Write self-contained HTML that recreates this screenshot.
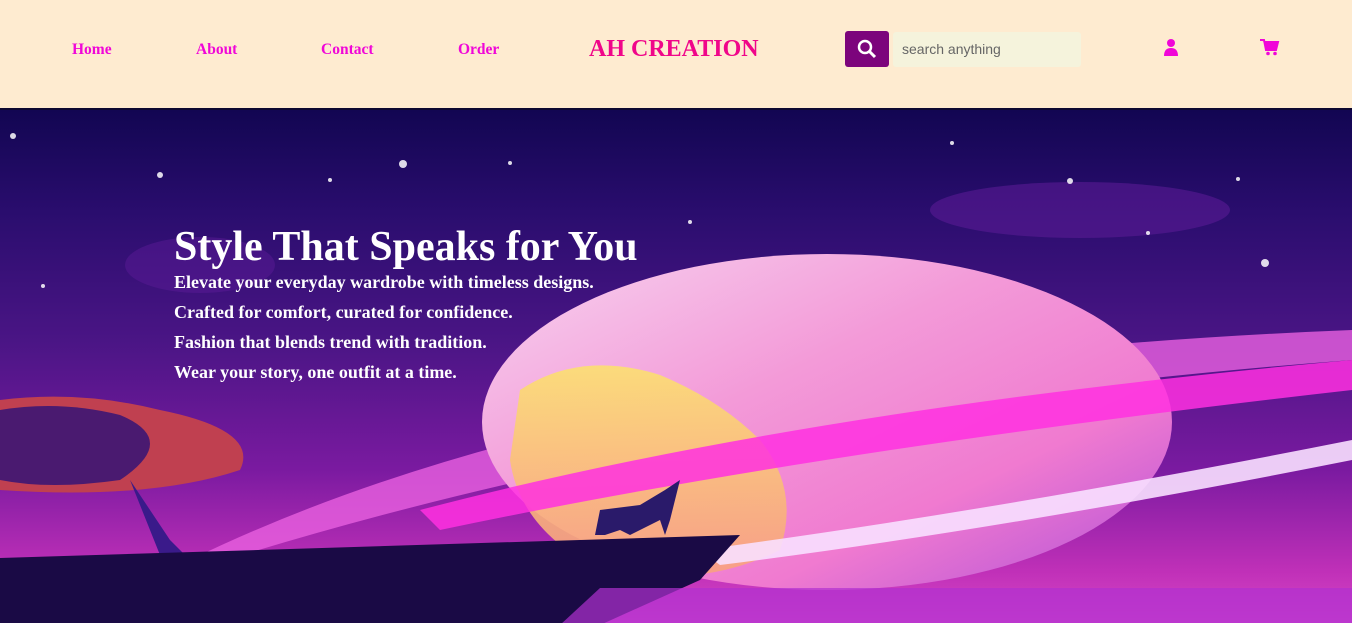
<!DOCTYPE html>
<html><head><meta charset="utf-8"><style>
*{margin:0;padding:0;box-sizing:border-box}
body{width:1352px;height:623px;overflow:hidden;font-family:"Liberation Serif",serif;background:#feebd0}
.hdr{position:absolute;left:0;top:0;width:1352px;height:108px;background:#feebd0}
.nav{position:absolute;top:41px;font-weight:bold;font-size:15.5px;color:#f006d8}
.logo{position:absolute;left:589px;top:36px;font-size:24px;font-weight:bold;color:#f0068a}
.sbtn{position:absolute;left:845px;top:31px;width:44px;height:36px;background:#7c047c;border-radius:3px}
.sin{position:absolute;left:893px;top:32px;width:188px;height:35px;background:#f5f3dc;border-radius:3px;font-family:"Liberation Sans",sans-serif;font-size:14px;color:#666;padding:9px 0 0 9px}
.hero{position:absolute;left:0;top:108px;width:1352px;height:515px;overflow:hidden;border-top:2px solid #0d0830;
background:linear-gradient(180deg,#120652 0%,#2a0d6e 20%,#4a1585 45%,#7a1aa0 70%,#c030b8 90%,#d848c8 100%)}
.t{position:absolute;color:#fff;font-weight:bold}
</style></head><body>
<div class="hdr">
<div class="nav" style="left:72px">Home</div>
<div class="nav" style="left:196px">About</div>
<div class="nav" style="left:321px">Contact</div>
<div class="nav" style="left:458px">Order</div>
<div class="logo">AH CREATION</div>
<div class="sbtn"><svg width="44" height="36"><circle cx="20" cy="16" r="6" stroke="#fff" stroke-width="2.5" fill="none"/><line x1="24.5" y1="20.5" x2="30" y2="26" stroke="#fff" stroke-width="3"/></svg></div>
<div class="sin">search anything</div>
<svg style="position:absolute;left:1162px;top:38px" width="18" height="18"><circle cx="9" cy="5" r="4" fill="#f006d8"/><path d="M2 18 Q2 10 9 10 Q16 10 16 18Z" fill="#f006d8"/></svg>
<svg style="position:absolute;left:1260px;top:38px" width="20" height="18"><path d="M0 2 H4 L6 12 H16 L18 4 H5" fill="#f006d8" stroke="#f006d8" stroke-width="2"/><circle cx="8" cy="15.5" r="1.8" fill="#f006d8"/><circle cx="15" cy="15.5" r="1.8" fill="#f006d8"/></svg>
</div>
<div class="hero">
<svg width="1352" height="515" style="position:absolute;left:0;top:0">
<defs><linearGradient id="p" x1="0" y1="0" x2="1" y2="1"><stop offset="0" stop-color="#f7d4f0"/><stop offset=".4" stop-color="#f39ad8"/><stop offset=".7" stop-color="#f07ad0"/><stop offset="1" stop-color="#b050d8"/></linearGradient>
<linearGradient id="y" x1="0" y1="0" x2="0" y2="1"><stop offset="0" stop-color="#fce070"/><stop offset="1" stop-color="#f8a080"/></linearGradient></defs>
<ellipse cx="1080" cy="100" rx="150" ry="28" fill="#5a1a95" opacity=".6"/>
<ellipse cx="200" cy="155" rx="75" ry="28" fill="#5a1a95" opacity=".5"/>
<path d="M190 450 Q600 250 1352 220 L1352 250 Q700 300 210 455Z" fill="#e860e0" opacity=".8"/>
<ellipse cx="827" cy="312" rx="345" ry="168" fill="url(#p)"/>
<path d="M520 280 Q580 240 660 265 Q720 290 760 330 Q800 380 780 440 Q700 480 600 460 Q520 420 510 350Z" fill="url(#y)" opacity=".9"/>
<path d="M420 400 Q800 300 1352 250 L1352 280 Q820 340 440 420Z" fill="#ff30e0" opacity=".85"/>
<path d="M700 440 Q1000 400 1352 330 L1352 350 Q1000 420 720 455Z" fill="#f8e0ff" opacity=".9"/>
<path d="M0 290 Q80 280 160 300 Q260 320 240 360 Q150 390 0 380Z" fill="#c04050"/>
<path d="M0 300 Q60 290 120 305 Q180 330 120 370 Q50 380 0 370Z" fill="#4a1a70"/>
<path d="M130 370 L170 430 L185 445 L160 445 Z" fill="#3a1a8a"/>
<path d="M0 448 L740 425 L700 470 L600 515 L0 515Z" fill="#1a0a45"/>
<path d="M600 478 L1352 478 L1352 515 L560 515Z" fill="#b030d0" opacity=".7"/>
<path d="M595 425 L600 400 L640 395 L665 380 L680 370 L670 410 L665 425 L660 410 L640 420 L630 425 L620 420 L605 425Z" fill="#2a1a6a"/>
<g fill="#fff" opacity=".85"><circle cx="13" cy="26" r="3"/><circle cx="160" cy="65" r="3"/><circle cx="403" cy="54" r="4"/><circle cx="510" cy="53" r="2"/><circle cx="1070" cy="71" r="3"/><circle cx="1265" cy="153" r="4"/><circle cx="952" cy="33" r="2"/><circle cx="690" cy="112" r="2"/><circle cx="43" cy="176" r="2"/><circle cx="1238" cy="69" r="2"/><circle cx="330" cy="70" r="2"/><circle cx="1148" cy="123" r="2"/></g>
</svg>
<div class="t" style="left:174px;top:113px;font-size:42px">Style That Speaks for You</div>
<div class="t" style="left:174px;top:157px;font-size:18px;line-height:30px">Elevate your everyday wardrobe with timeless designs.<br>Crafted for comfort, curated for confidence.<br>Fashion that blends trend with tradition.<br>Wear your story, one outfit at a time.</div>
</div>
</body></html>
